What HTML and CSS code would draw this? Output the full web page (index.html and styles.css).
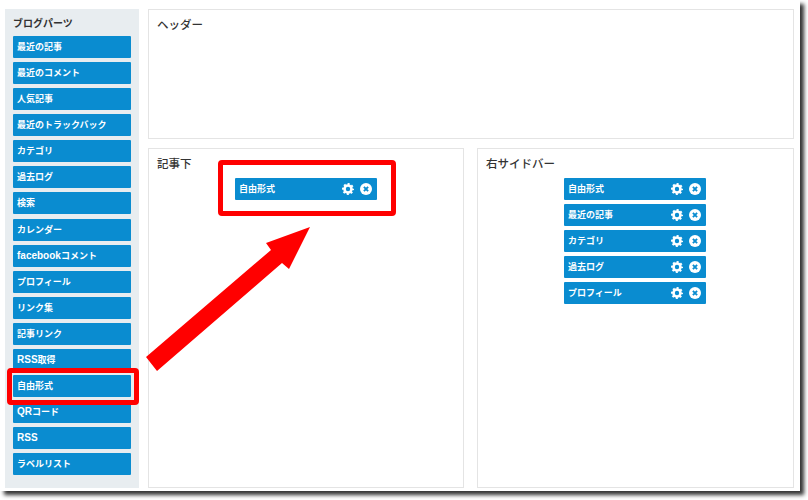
FILE: index.html
```html
<!DOCTYPE html>
<html lang="ja">
<head>
<meta charset="utf-8">
<title>ブログパーツ</title>
<link rel="stylesheet" href="styles.css">
</head>
<body>
<svg class="defs" width="0" height="0" aria-hidden="true">
  <symbol id="gear" viewBox="0 0 12 12">
    <circle class="gear-ring" cx="6" cy="6" r="3.5"/>
    <circle class="gear-teeth" cx="6" cy="6" r="5"/>
  </symbol>
  <symbol id="close" viewBox="0 0 12 12">
    <circle class="close-disc" cx="6" cy="6" r="6"/>
    <path class="close-x" d="M3.9 3.9 8.1 8.1M8.1 3.9 3.9 8.1"/>
  </symbol>
</svg>
<div class="page">
  <aside class="sidebar">
    <h2 class="side-title">ブログパーツ</h2>
    <ul class="parts">
      <li class="part">最近の記事</li>
      <li class="part">最近のコメント</li>
      <li class="part">人気記事</li>
      <li class="part">最近のトラックバック</li>
      <li class="part">カテゴリ</li>
      <li class="part">過去ログ</li>
      <li class="part">検索</li>
      <li class="part">カレンダー</li>
      <li class="part"><span class="latin">facebook</span>コメント</li>
      <li class="part">プロフィール</li>
      <li class="part">リンク集</li>
      <li class="part">記事リンク</li>
      <li class="part"><span class="latin">RSS</span>取得</li>
      <li class="part">自由形式</li>
      <li class="part"><span class="latin">QR</span>コード</li>
      <li class="part"><span class="latin">RSS</span></li>
      <li class="part">ラベルリスト</li>
    </ul>
  </aside>
  <main class="main">
    <section class="panel panel-head">
      <h2 class="panel-title">ヘッダー</h2>
    </section>
    <div class="columns">
      <section class="panel panel-left">
        <h2 class="panel-title">記事下</h2>
        <ul class="widgets">
          <li class="widget"><span class="widget-name">自由形式</span><svg class="icon"><use href="#gear"/></svg><svg class="icon"><use href="#close"/></svg></li>
        </ul>
      </section>
      <section class="panel panel-right">
        <h2 class="panel-title">右サイドバー</h2>
        <ul class="widgets">
          <li class="widget"><span class="widget-name">自由形式</span><svg class="icon"><use href="#gear"/></svg><svg class="icon"><use href="#close"/></svg></li>
          <li class="widget"><span class="widget-name">最近の記事</span><svg class="icon"><use href="#gear"/></svg><svg class="icon"><use href="#close"/></svg></li>
          <li class="widget"><span class="widget-name">カテゴリ</span><svg class="icon"><use href="#gear"/></svg><svg class="icon"><use href="#close"/></svg></li>
          <li class="widget"><span class="widget-name">過去ログ</span><svg class="icon"><use href="#gear"/></svg><svg class="icon"><use href="#close"/></svg></li>
          <li class="widget"><span class="widget-name">プロフィール</span><svg class="icon"><use href="#gear"/></svg><svg class="icon"><use href="#close"/></svg></li>
        </ul>
      </section>
    </div>
  </main>
  <div class="mark mark-side"></div>
  <div class="mark mark-widget"></div>
  <svg class="arrow" viewBox="0 0 808 500" aria-hidden="true">
    <polygon points="310,227 266,243 271,250 146,357 157,371 282,263 289,269"/>
  </svg>
</div>
</body>
</html>
```

FILE: styles.css
```css
* { box-sizing: border-box; }

html, body {
  margin: 0;
  height: 100%;
  background: #fff;
}

body {
  font-family: "Noto Sans CJK JP", "Noto Sans", sans-serif;
  overflow: hidden;
}

.defs { position: absolute; }

.page {
  position: relative;
  display: flex;
  gap: 9px;
  width: 800px;
  height: 491px;
  padding: 9px 6px 3px 5px;
  background: #fff;
  box-shadow: 4px 4px 4px #333;
}

.sidebar {
  flex: 0 0 134px;
  padding: 0 8px 0 8px;
  background: #e8edf0;
}

.side-title {
  margin: 0;
  height: 27px;
  font-size: 10px;
  line-height: 27px;
  font-weight: 700;
  color: #333;
}

.parts, .widgets {
  margin: 0;
  padding: 0;
  list-style: none;
  display: flex;
  flex-direction: column;
  gap: 4px;
}

.parts { gap: 4.08px; }

.part, .widget {
  height: 22px;
  background: #0a8cd0;
  border-radius: 1px;
  color: #fff;
  font-size: 9px;
  font-weight: 700;
  line-height: 22px;
}

.part { padding-left: 4px; }

.latin {
  font-family: "Liberation Sans", sans-serif;
  font-size: 10px;
}

.main {
  flex: 1;
  display: flex;
  flex-direction: column;
  gap: 9px;
  min-width: 0;
}

.panel {
  flex: 1;
  padding: 7px 8px 0;
  background: #fff;
  border: 1px solid #e4e4e4;
}

.panel-head { flex: 0 0 130px; }

.panel-left { flex: 0 0 316px; }

.panel-right { padding-right: 9px; }

.columns {
  flex: 1;
  display: flex;
  gap: 13px;
}

.panel-title {
  margin: 0;
  height: 15px;
  font-size: 11.5px;
  line-height: 15px;
  font-weight: 500;
  color: #333;
}

.widgets {
  align-items: center;
  margin-top: 7px;
}

.widget {
  display: flex;
  align-items: center;
  gap: 6px;
  width: 142px;
  padding: 0 5px 0 4px;
}

.widget-name { flex: 1; }

.icon {
  width: 12px;
  height: 12px;
}

.gear-ring {
  fill: none;
  stroke: #fff;
  stroke-width: 2.6;
}

.gear-teeth {
  fill: none;
  stroke: #fff;
  stroke-width: 2;
  stroke-dasharray: 2 1.927;
  stroke-dashoffset: 1;
}

.close-disc { fill: #fff; }

.close-x {
  fill: none;
  stroke: #0a8cd0;
  stroke-width: 1.9;
}

.mark {
  position: absolute;
  border: 5px solid #f00;
  border-radius: 4px;
}

.mark-side {
  left: 7px;
  top: 368px;
  width: 132px;
  height: 37px;
}

.mark-widget {
  left: 218px;
  top: 160px;
  width: 178px;
  height: 56px;
}

.arrow {
  position: absolute;
  left: 0;
  top: 0;
  width: 808px;
  height: 500px;
  fill: #f00;
  pointer-events: none;
}
```
